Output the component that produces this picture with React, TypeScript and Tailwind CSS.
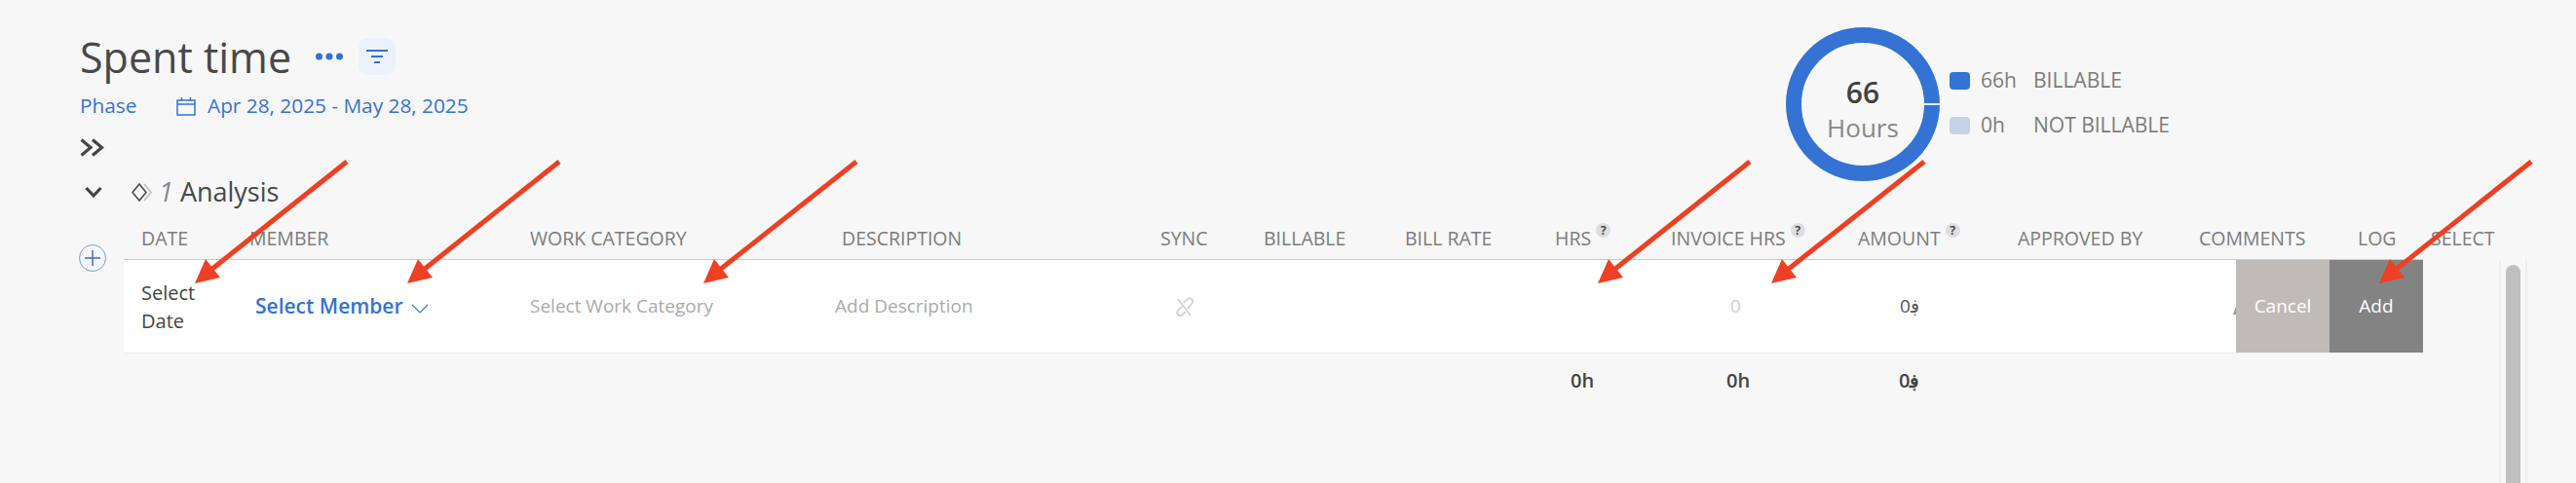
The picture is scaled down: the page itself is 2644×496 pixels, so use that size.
import React from 'react';

const headerCols = 'grid grid-cols-[129px_288px_320px_327px_106px_145px_154px_119px_192px_164px_186px_163px_75px_70px]';
const rowCols = 'grid grid-cols-[129px_288px_320px_327px_106px_145px_154px_119px_192px_164px_186px_38px_96px_96px]';

// tail x, tip x of the red annotation arrows
const arrows = [
  [356, 200],
  [574, 418],
  [879, 722],
  [1796, 1640],
  [1975, 1818],
  [2598, 2442],
];

function Help() {
  return (
    <span className="mb-[17px] ml-[5px] flex h-[15px] w-[15px] items-center justify-center rounded-full bg-[#dedede] text-[13px] leading-none font-semibold text-[#333]">
      ?
    </span>
  );
}

function Head({ label, help, className = '' }: { label: string; help?: boolean; className?: string }) {
  return (
    <div className={`flex items-center whitespace-nowrap ${className}`}>
      {label}
      {help && <Help />}
    </div>
  );
}

function Amount({ className = '' }: { className?: string }) {
  return (
    <div className={`flex items-center ${className}`}>
      <span>0</span>
      <span>{'ڣ\u200d'}</span>
    </div>
  );
}

function Donut() {
  return (
    <div className="grid h-[158px] w-[158px] shrink-0">
      <svg className="col-start-1 row-start-1" width="158" height="158" viewBox="0 0 158 158">
        <circle cx="79" cy="79" r="71" fill="none" stroke="#3473d4" strokeWidth="16" />
        <rect x="141" y="78" width="17" height="2" fill="#e3ecf9" />
      </svg>
      <div className="col-start-1 row-start-1 flex flex-col items-center pt-[48px]">
        <span className="text-[30px] leading-[38px] font-semibold text-[#404040]">66</span>
        <span className="text-[26px] leading-[34px] text-[#888]">Hours</span>
      </div>
    </div>
  );
}

function Legend({ swatch, hours, label, className = '' }: { swatch: string; hours: string; label: string; className?: string }) {
  return (
    <div className={`flex h-[20px] items-center text-[21px] text-[#7c7c7c] ${className}`}>
      <span className={`h-[18px] w-[21px] rounded-[4px] ${swatch}`} />
      <span className="ml-[11px] w-[54px]">{hours}</span>
      <span className="font-medium whitespace-nowrap">{label}</span>
    </div>
  );
}

export default function App() {
  return (
    <div className="relative flex h-[496px] w-[2644px] flex-col overflow-hidden bg-[#f7f7f7] font-['Open_Sans',sans-serif]">
      <div className="flex h-[224px] shrink-0">
        <div className="w-[1833px] shrink-0 pt-[39px] pl-[82px]">
          <div className="flex h-[38px] items-center">
            <h1 className="text-[43px] leading-none text-[#484848]">Spent time</h1>
            <svg className="ml-[25px]" width="28" height="8" viewBox="0 0 28 8" fill="#3473d4">
              <circle cx="3.5" cy="4" r="3.5" />
              <circle cx="14" cy="4" r="3.5" />
              <circle cx="24.5" cy="4" r="3.5" />
            </svg>
            <button className="ml-[16px] flex h-[38px] w-[38px] items-center justify-center rounded-[9px] bg-[#ecf2fc]">
              <svg width="22" height="14" viewBox="0 0 22 14" fill="#3473d4">
                <rect x="0" y="0" width="22" height="2" />
                <rect x="5" y="6" width="12" height="2" />
                <rect x="8" y="12" width="6" height="2" />
              </svg>
            </button>
          </div>

          <div className="mt-[20px] flex h-[24px] items-center text-[20.8px] text-[#3473d4]">
            <span className="w-[99px]">Phase</span>
            <svg width="20" height="19" viewBox="0 0 20 19" fill="none" stroke="#3473d4" strokeWidth="1.5">
              <rect x="1" y="3" width="18" height="15" />
              <path d="M1 7h18M5.5 0v4M14.5 0v4" />
            </svg>
            <span className="ml-[12px] whitespace-nowrap">Apr 28, 2025 - May 28, 2025</span>
          </div>

          <svg className="mt-[21px]" width="25" height="19" viewBox="0 0 25 19" fill="none" stroke="#444" strokeWidth="3.2">
            <path d="M1.500 1.500l9.500 8-9.500 8M13 1.500l9.500 8-9.500 8" />
          </svg>

          <div className="mt-[23px] flex h-[26px] items-center">
            <svg className="ml-[5px]" width="18" height="13" viewBox="0 0 18 13" fill="none" stroke="#444" strokeWidth="3.2">
              <path d="M1.500 2l7.500 8 7.500-8" />
            </svg>
            <svg className="ml-[30px]" width="21" height="19" viewBox="0 0 21 19" fill="none">
              <path d="M8 1l7 8.500-7 8.500-7-8.500z" stroke="#444" strokeWidth="1.5" />
              <path d="M13 1l7 8.500-7 8.500" stroke="#bbb" strokeWidth="1.500" />
            </svg>
            <span className="ml-[7px] text-[27px] text-[#888] italic">1</span>
            <span className="ml-[7px] text-[27px] text-[#484848]">Analysis</span>
          </div>
        </div>

        <div className="pt-[28px]">
          <div className="flex">
            <Donut />
            <div className="ml-[10px] pt-[45px]">
              <Legend swatch="bg-[#3473d4]" hours="66h" label="BILLABLE" />
              <Legend swatch="bg-[#c5d2e9]" hours="0h" label="NOT BILLABLE" className="mt-[26px]" />
            </div>
          </div>
        </div>
      </div>

      <div className="flex min-h-0 flex-1">
        <div className="w-[127px] shrink-0 pt-[27px] pl-[81px]">
          <button className="flex h-[28px] w-[28px] items-center justify-center rounded-full border border-[#6f9fe8] text-[#3473d4]">
            <svg width="18" height="18" viewBox="0 0 18 18" stroke="currentColor" strokeWidth="1.500">
              <path d="M9 1v16M1 9h16" />
            </svg>
          </button>
        </div>

        <div className="min-w-0 flex-1">
          <div className={`${headerCols} h-[42px] items-center text-[19.5px] font-medium text-[#7c7c7c]`}>
            <Head label="DATE" className="pl-[18px]" />
            <Head label="MEMBER" />
            <Head label="WORK CATEGORY" />
            <Head label="DESCRIPTION" />
            <Head label="SYNC" />
            <Head label="BILLABLE" />
            <Head label="BILL RATE" />
            <Head label="HRS" help />
            <Head label="INVOICE HRS" help />
            <Head label="AMOUNT" help />
            <Head label="APPROVED BY" />
            <Head label="COMMENTS" />
            <Head label="LOG" />
            <Head label="SELECT" />
          </div>

          <div className="flex">
            <div className="w-[2438px] shrink-0">
              <div className={`${rowCols} h-[97px] w-[2360px] items-center border-t border-b border-t-[#ccc] border-b-[#ececec] bg-white text-[19px]`}>
                <div className="pl-[18px] text-[20px] leading-[29px] font-medium text-[#444]">
                  Select
                  <br />
                  Date
                </div>
                <div className="flex items-center pl-[6px] text-[#3473d4]">
                  <span className="text-[21px] font-semibold whitespace-nowrap">Select Member</span>
                  <svg className="mt-[4px] ml-[8px]" width="18" height="10" viewBox="0 0 18 10" fill="none" stroke="#3473d4" strokeWidth="1.200">
                    <path d="M1 1l8 8 8-8" />
                  </svg>
                </div>
                <div className="text-[#aaa]">Select Work Category</div>
                <div className="-ml-[7px] text-[#aaa]">Add Description</div>
                <div className="pl-[15px]">
                  <svg width="20" height="20" viewBox="0 0 20 20" fill="none" stroke="#d4d4d4" strokeWidth="2">
                    <path d="M9 6l3.500-3.500a3.200 3.200 0 0 1 5 4L13 12" />
                    <path d="M11 15l-3 3a3 3 0 0 1-5-4l4-4" />
                    <path d="M3 2l13 17" />
                  </svg>
                </div>
                <div />
                <div />
                <div />
                <div className="pl-[61px] text-[#cfcfcf]">0</div>
                <Amount className="pl-[43px] text-[#555]" />
                <div />
                <div className="flex justify-end pt-[8px]">
                  <svg width="3" height="8" viewBox="0 0 3 8" fill="#999">
                    <path d="M3 0v8H0z" />
                  </svg>
                </div>
                <button className="flex h-full items-center justify-center bg-[#bfbbb9] text-[19px] text-white">Cancel</button>
                <button className="flex h-full items-center justify-center bg-[#838383] text-[19px] font-medium text-white">Add</button>
              </div>

              <div className={`${rowCols} h-[56px] w-[2360px] items-center text-[20px] font-semibold text-[#444]`}>
                <div className="col-start-8 pl-[16px]">0h</div>
                <div className="pl-[57px]">0h</div>
                <Amount className="pl-[42px]" />
              </div>
            </div>

            <div className="h-[300px] w-[29px] shrink-0 border-x-2 border-[#eeeeee] px-[5px] pt-[6px]">
              <div className="h-[300px] rounded-full bg-[#bfbfbf]" />
            </div>
          </div>
        </div>
      </div>

      <svg className="pointer-events-none absolute top-0 left-0" width="2644" height="496" fill="#ee4023" stroke="none">
        {arrows.map(([tail, tip]) => (
          <g key={tip}>
            <path d={`M${tail} 166L${tip + 18} 276`} stroke="#ee4023" strokeWidth="5" />
            <path d={`M${tip} 291l11-25 15 19z`} />
          </g>
        ))}
      </svg>
    </div>
  );
}
